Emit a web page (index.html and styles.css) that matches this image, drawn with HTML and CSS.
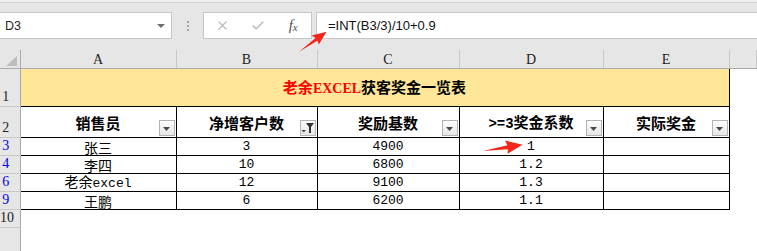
FILE: index.html
```html
<html lang="zh-CN">
<head>
  <meta charset="UTF-8" />
  <title>获客奖金一览表</title>
  <link rel="stylesheet" href="styles.css">
</head>

<body>
  <!-- barre de formule -->
  <div class="toolbar">
    <div class="namebox"><span>D3</span><span class="caret"></span></div>
    <div class="grip"><i></i><i></i><i></i></div>
    <div class="fxbox">
      <span class="slot">
        <svg width="9" height="9" viewBox="0 0 9 9"><path d="M0.5 0.5L8.5 8.5M8.5 0.5L0.5 8.5" stroke="#bcbcbc" stroke-width="1.3" fill="none"/></svg>
      </span>
      <span class="slot">
        <svg width="12" height="9" viewBox="0 0 12 9"><path d="M0.7 4.4L4.2 7.8L11.3 0.8" stroke="#bcbcbc" stroke-width="1.5" fill="none"/></svg>
      </span>
      <span class="slot fx">f<small>x</small></span>
    </div>
    <div class="formula">=INT(B3/3)/10+0.9</div>
  </div>

  <table class="sheet">
    <colgroup>
      <col style="width:20px">
      <col style="width:156px">
      <col style="width:141px">
      <col style="width:142px">
      <col style="width:144px">
      <col style="width:126px">
      <col>
    </colgroup>
    <thead>
      <tr>
        <th class="corner">
          <svg width="11" height="10" viewBox="0 0 11 10"><path d="M11 0V10H0Z" fill="#bdbdbd"/></svg>
        </th>
        <th>A</th><th>B</th><th>C</th><th>D</th><th>E</th><th></th>
      </tr>
    </thead>
    <tbody>
      <tr class="r-title">
        <th class="rh">1</th>
        <td colspan="5" class="title"><span class="red">老余<span class="word">EXCEL</span></span>获客奖金一览表</td>
        <td class="blank"></td>
      </tr>
      <tr class="r-head">
        <th class="rh">2</th>
        <td>销售员<span class="filter"><svg width="7" height="4" viewBox="0 0 7 4"><path d="M0 0H7L3.5 4Z" fill="#4a4a4a"/></svg></span></td>
        <td>净增客户数<span class="filter on"><svg width="14" height="12" viewBox="0 0 14 12"><path d="M5 1H13L10 5V11L8 11V5Z" fill="#333"/><path d="M0.5 8H5L2.75 10.5Z" fill="#4a4a4a"/></svg></span></td>
        <td>奖励基数<span class="filter"><svg width="7" height="4" viewBox="0 0 7 4"><path d="M0 0H7L3.5 4Z" fill="#4a4a4a"/></svg></span></td>
        <td><span class="latin">&gt;=3</span>奖金系数<span class="filter"><svg width="7" height="4" viewBox="0 0 7 4"><path d="M0 0H7L3.5 4Z" fill="#4a4a4a"/></svg></span></td>
        <td>实际奖金<span class="filter"><svg width="7" height="4" viewBox="0 0 7 4"><path d="M0 0H7L3.5 4Z" fill="#4a4a4a"/></svg></span></td>
        <td class="blank"></td>
      </tr>
      <tr class="r-data">
        <th class="rh hit">3</th>
        <td>张三</td><td class="num">3</td><td class="num">4900</td><td class="num">1</td><td></td>
        <td class="blank"></td>
      </tr>
      <tr class="r-data">
        <th class="rh hit">4</th>
        <td>李四</td><td class="num">10</td><td class="num">6800</td><td class="num">1.2</td><td></td>
        <td class="blank"></td>
      </tr>
      <tr class="r-data">
        <th class="rh hit">6</th>
        <td>老余<span class="latin">excel</span></td><td class="num">12</td><td class="num">9100</td><td class="num">1.3</td><td></td>
        <td class="blank"></td>
      </tr>
      <tr class="r-data">
        <th class="rh hit">9</th>
        <td>王鹏</td><td class="num">6</td><td class="num">6200</td><td class="num">1.1</td><td></td>
        <td class="blank"></td>
      </tr>
      <tr class="r-empty">
        <th class="rh">10</th>
        <td class="blank" colspan="6"></td>
      </tr>
      <tr class="r-rest">
        <th class="rh"></th>
        <td class="blank" colspan="6"></td>
      </tr>
    </tbody>
  </table>

  <!-- fleches rouges -->
  <svg class="pointer p-formula" width="34" height="14" viewBox="0 0 40 16"><path d="M0 9L25 6.4L23 1.2L40 7.5L24 14.8L25 10.2Z" fill="#f4261b"/></svg>
  <svg class="pointer p-cell" width="40" height="16" viewBox="0 0 40 16"><path d="M0 9L25 6.4L23 1.2L40 7.5L24 14.8L25 10.2Z" fill="#f4261b"/></svg>
</body>
</html>
```

FILE: styles.css
```css
* {
  box-sizing: border-box;
}

body {
  margin: 0;
  height: 251px;
  overflow: hidden;
  position: relative;
  background: #fff;
  font-family: "Liberation Sans", sans-serif;
}

/* barre de formule */
.toolbar {
  display: flex;
  height: 50px;
  padding: 12px 0 11px;
  background: linear-gradient(#efefef 0 2px, #d5d5d5 2px 3px, #e6e6e6 3px);
}

.namebox {
  width: 172px;
  flex: none;
  display: flex;
  align-items: center;
  justify-content: space-between;
  padding: 0 6px 0 5px;
  background: #fff;
  border: 1px solid #c6c6c6;
  border-left: none;
  font-size: 12.5px;
  color: #262626;
}

.caret {
  width: 0;
  height: 0;
  border-left: 4px solid transparent;
  border-right: 4px solid transparent;
  border-top: 4px solid #6e6e6e;
}

.grip {
  width: 31px;
  flex: none;
  display: flex;
  flex-direction: column;
  align-items: center;
  justify-content: center;
  gap: 2px;
}

.grip i {
  width: 2px;
  height: 2px;
  background: #a5a5a5;
}

.fxbox {
  width: 109px;
  flex: none;
  display: flex;
  align-items: center;
  background: #fff;
  border: 1px solid #c6c6c6;
}

.slot {
  display: flex;
  justify-content: center;
  align-items: center;
}

.slot:nth-child(1) { width: 38px; }
.slot:nth-child(2) { width: 34px; }
.slot:nth-child(3) { width: 36px; }

.fx {
  font-family: "Liberation Serif", serif;
  font-style: italic;
  font-size: 15px;
  color: #4d4d4d;
}

.fx small {
  font-size: 11px;
  position: relative;
  top: 1px;
}

.formula {
  flex: 1;
  margin-left: 4px;
  display: flex;
  align-items: center;
  padding-left: 11px;
  background: #fff;
  border: 1px solid #c6c6c6;
  border-right: none;
  font-size: 13px;
  color: #111;
}

/* feuille */
.sheet {
  border-collapse: collapse;
  table-layout: fixed;
  width: 757px;
}

.sheet thead th {
  height: 17px;
  padding: 2px 0 0;
  background: #e6e6e6;
  border-right: 1px solid #c8c8c8;
  border-bottom: 1px solid #ababab;
  font: 14px "Liberation Serif", serif;
  color: #222;
  font-weight: normal;
}

.sheet thead th.corner {
  border-right: 1px solid #ababab;
  text-align: right;
  vertical-align: bottom;
  padding: 0 3px 2px 0;
}

.corner svg {
  display: block;
  margin-left: auto;
}

.rh {
  padding: 0 8px 1px 0;
  background: #e6e6e6;
  border-right: 1px solid #ababab;
  border-bottom: 1px solid #c8c8c8;
  font: 14px "Liberation Serif", serif;
  color: #222;
  font-weight: normal;
  text-align: center;
  vertical-align: bottom;
  white-space: nowrap;
}

.rh.hit {
  color: #0000ee;
  vertical-align: middle;
}

.sheet td {
  padding: 0;
  border: 1px solid #000;
  font: 14px/14px "Noto Sans CJK SC", sans-serif;
  color: #000;
  text-align: center;
  vertical-align: middle;
  white-space: nowrap;
}

.sheet td.blank {
  border: none;
}

.r-title { height: 38px; }
.r-head { height: 31px; }
.r-data { height: 18px; }
.r-empty { height: 17px; }
.r-rest { height: 26px; }

.sheet td.title {
  background: #ffe699;
  border-top: none;
  font-size: 15px;
  font-weight: bold;
}

.red {
  color: #ff0000;
}

.word {
  font-family: "Liberation Serif", serif;
  font-size: 14px;
}

.latin {
  font-family: "Liberation Mono", monospace;
  font-size: 13px;
}

.r-head td {
  position: relative;
  font-size: 15px;
  font-weight: bold;
  padding-top: 2px;
}

.r-head .latin {
  font-size: 14px;
}

.sheet td.num {
  font: 13px/14px "Liberation Mono", monospace;
}

.filter {
  position: absolute;
  right: 1px;
  bottom: 1px;
  width: 16px;
  height: 16px;
  display: flex;
  align-items: center;
  justify-content: center;
  border: 1px solid #b3b3b3;
  background: linear-gradient(#fdfdfd, #e6e6e6);
}

.filter svg {
  display: block;
  margin-top: 2px;
}

.filter.on svg {
  margin-top: 0;
}

/* fleches */
.pointer {
  position: absolute;
}

.p-formula {
  left: 299px;
  top: 44px;
  transform-origin: 0 7.6px;
  transform: rotate(-34deg);
}

.p-cell {
  left: 483px;
  top: 142px;
  transform-origin: 0 9px;
  transform: rotate(-7deg);
}
```
